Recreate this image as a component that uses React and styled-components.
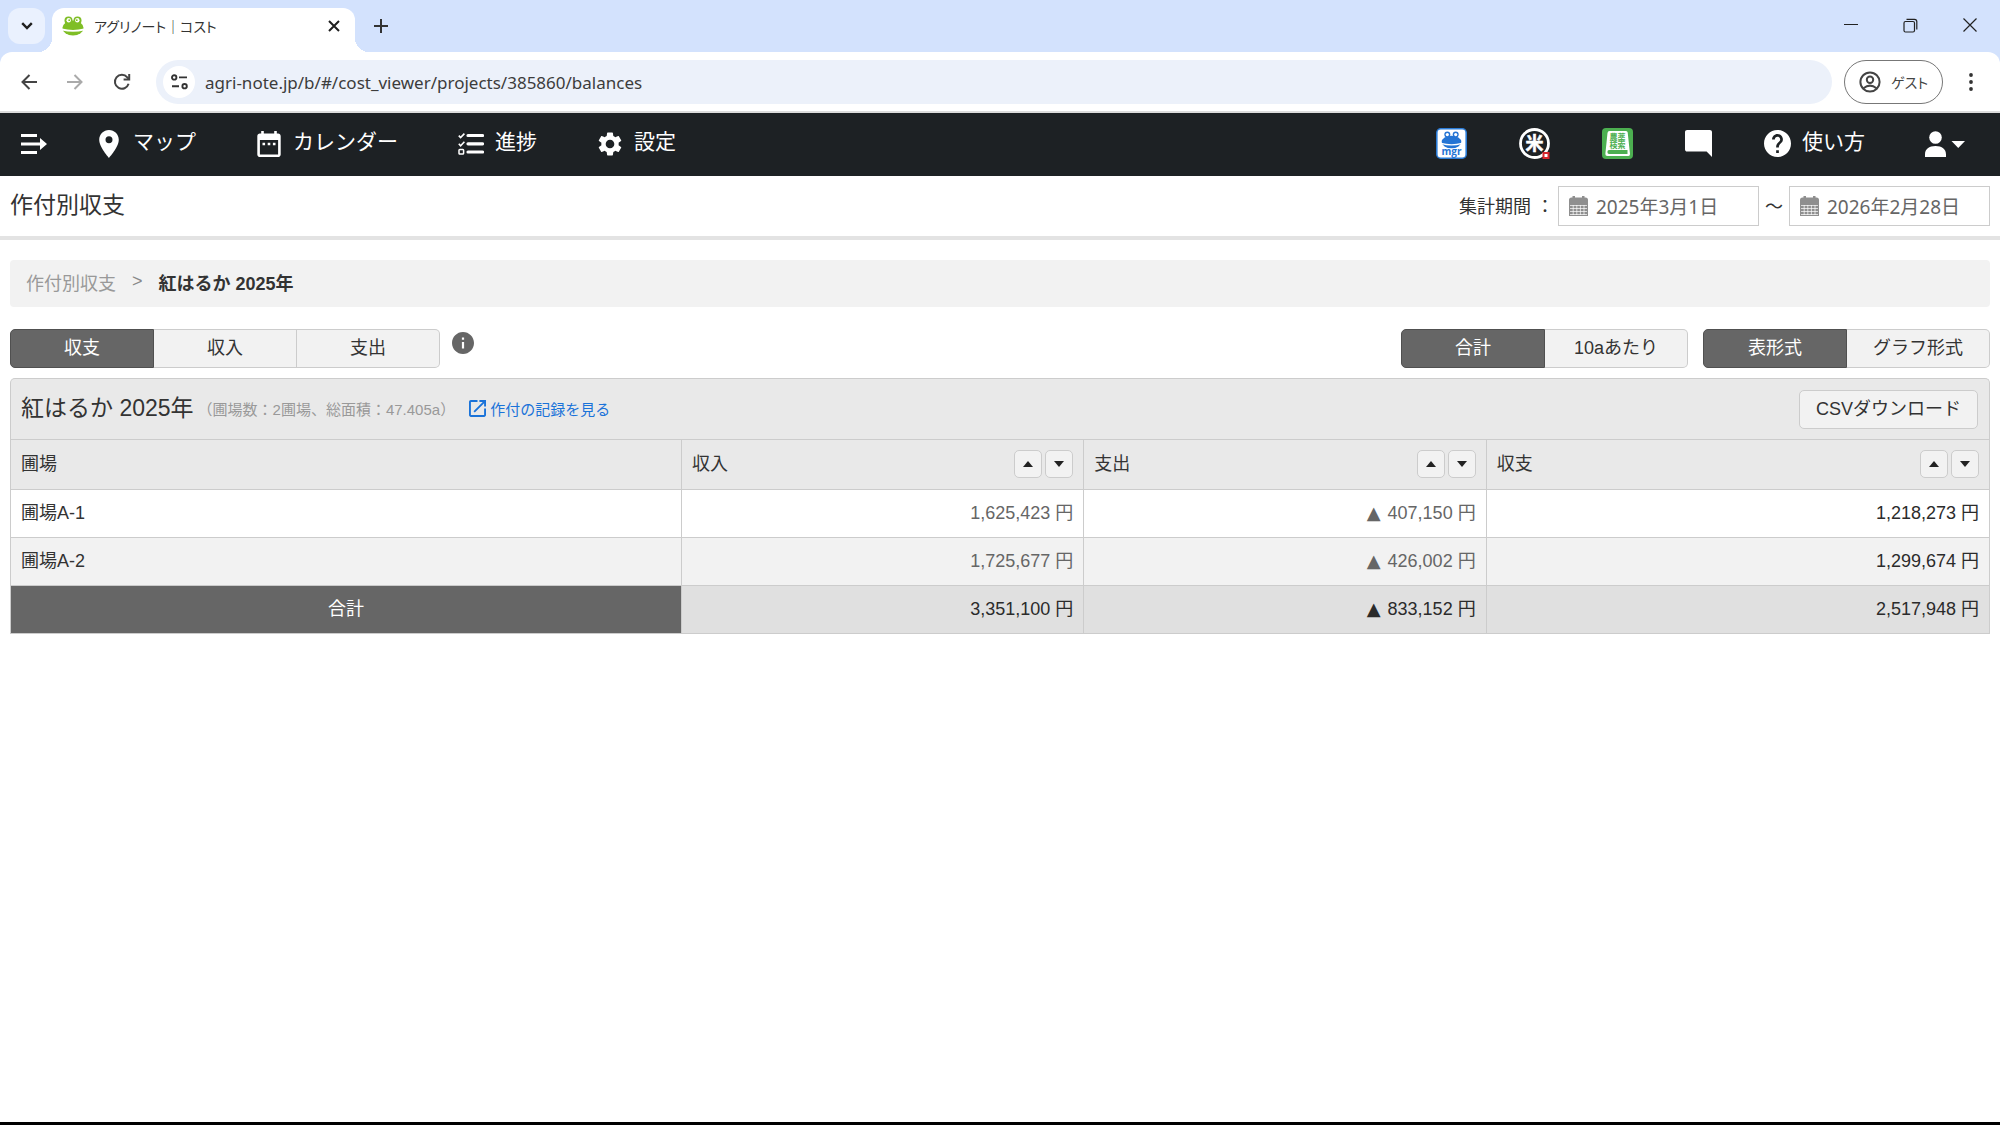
import React, { useState } from "react";
import styled, { createGlobalStyle } from "styled-components";

const appFont = `"Liberation Sans", "Noto Sans CJK JP", sans-serif`;
const uiFont = `"Noto Sans", "Noto Sans CJK JP", sans-serif`;

const fields = [
  { name: "圃場A-1", income: "1,625,423 円", cost: "407,150 円", balance: "1,218,273 円" },
  { name: "圃場A-2", income: "1,725,677 円", cost: "426,002 円", balance: "1,299,674 円" },
];

const columns = ["収入", "支出", "収支"];

/* ---------- icons ---------- */

const FrogIcon = () => (
  <svg width="22" height="20" viewBox="0 0 22 20" aria-hidden="true">
    <circle cx="6.5" cy="4.5" r="4" fill="#7fbe26" />
    <circle cx="15.5" cy="4.5" r="4" fill="#7fbe26" />
    <ellipse cx="11" cy="12" rx="10.6" ry="7.6" fill="#7fbe26" />
    <circle cx="6.7" cy="4.2" r="2.2" fill="#fff" />
    <circle cx="15.3" cy="4.2" r="2.2" fill="#fff" />
    <circle cx="7.2" cy="4.2" r="0.9" fill="#7fbe26" />
    <circle cx="14.8" cy="4.2" r="0.9" fill="#7fbe26" />
    <path d="M0 12.6Q11 15.4 22 12.6V14.4Q11 17 0 14.4Z" fill="#fff" />
  </svg>
);

const ChevronIcon = () => (
  <svg width="14" height="10" viewBox="0 0 14 10" fill="none" stroke="#1f1f1f" strokeWidth="2.4" aria-hidden="true">
    <path d="M2.2 2.2L7 7l4.8-4.8" />
  </svg>
);

const CloseIcon = () => (
  <svg width="12" height="12" viewBox="0 0 12 12" stroke="#1f1f1f" strokeWidth="2" aria-hidden="true">
    <path d="M1 1l10 10M11 1L1 11" />
  </svg>
);

const PlusIcon = () => (
  <svg width="14" height="14" viewBox="0 0 14 14" stroke="#333" strokeWidth="2" aria-hidden="true">
    <path d="M7 0v14M0 7h14" />
  </svg>
);

const MinimizeIcon = () => (
  <svg width="14" height="14" viewBox="0 0 14 14" stroke="#222" aria-hidden="true">
    <path d="M0 6.5h14" />
  </svg>
);

const RestoreIcon = () => (
  <svg width="15" height="15" viewBox="0 0 15 15" fill="none" stroke="#222" strokeWidth="1.2" aria-hidden="true">
    <rect x="1" y="3.5" width="10.5" height="10.5" rx="1.5" />
    <path d="M3.5 1.3h8q2.3 0 2.3 2.3v8" />
  </svg>
);

const QuitIcon = () => (
  <svg width="14" height="14" viewBox="0 0 14 14" stroke="#222" strokeWidth="1.2" aria-hidden="true">
    <path d="M.5.5l13 13M13.5.5l-13 13" />
  </svg>
);

const ArrowIcon = ({ color, forward }) => (
  <svg width="16" height="16" viewBox="0 0 16 16" fill="none" stroke={color} strokeWidth="2" aria-hidden="true">
    <path d={forward ? "M0 8h14M7.5 1l7 7-7 7" : "M16 8H2M8.5 1l-7 7 7 7"} />
  </svg>
);

const ReloadIcon = () => (
  <svg width="18" height="18" viewBox="0 0 18 18" fill="none" stroke="#444" strokeWidth="2" aria-hidden="true">
    <path d="M15.6 10.8A7 7 0 1 1 14.3 4.3L16 6.2" />
    <path d="M16.2 1v5.6h-5.6" />
  </svg>
);

const SiteIcon = () => (
  <svg width="17" height="16" viewBox="0 0 17 16" fill="none" stroke="#333" strokeWidth="1.9" aria-hidden="true">
    <circle cx="3.2" cy="3.4" r="2.2" />
    <path d="M8 3.4h8M1 12.2h7" />
    <circle cx="13.6" cy="12.2" r="2.2" />
  </svg>
);

const GuestIcon = () => (
  <svg width="22" height="22" viewBox="0 0 22 22" fill="none" stroke="#444" strokeWidth="2" aria-hidden="true">
    <circle cx="11" cy="11" r="9.6" />
    <circle cx="11" cy="8.8" r="3.2" />
    <path d="M4.5 17.3Q11 12 17.5 17.3" />
  </svg>
);

const DotsIcon = () => (
  <svg width="4" height="18" viewBox="0 0 4 18" fill="#333" aria-hidden="true">
    <circle cx="2" cy="2" r="1.9" />
    <circle cx="2" cy="9" r="1.9" />
    <circle cx="2" cy="16" r="1.9" />
  </svg>
);

const MenuIcon = () => (
  <svg width="26" height="20" viewBox="0 0 26 20" fill="#fff" aria-hidden="true">
    <path d="M0 0h16v3H0zM0 8.5h19v3H0zM0 17h16v3H0zM19 4l7 6-7 6z" />
  </svg>
);

const PinIcon = () => (
  <svg width="26" height="28" viewBox="2.7 2 18.6 20" fill="#fff" aria-hidden="true">
    <path d="M12 2C8.13 2 5 5.13 5 9c0 5.25 7 13 7 13s7-7.75 7-13c0-3.87-3.13-7-7-7zm0 9.5a2.5 2.5 0 0 1 0-5 2.5 2.5 0 0 1 0 5z" />
  </svg>
);

const CalendarIcon = () => (
  <svg width="26" height="26" viewBox="2 2 20 20" fill="#fff" aria-hidden="true">
    <path d="M9 11H7v2h2v-2zm4 0h-2v2h2v-2zm4 0h-2v2h2v-2zm2-7h-1V2h-2v2H8V2H6v2H5c-1.11 0-1.99.9-1.99 2L3 20c0 1.1.89 2 2 2h14c1.1 0 2-.9 2-2V6c0-1.1-.9-2-2-2zm0 16H5V9h14v11z" />
  </svg>
);

const ProgressIcon = () => (
  <svg width="26" height="22" viewBox="0 0 26 22" fill="none" stroke="#fff" aria-hidden="true">
    <path d="M10 2.5h14.5M10 10.8h14.5M10 19h14.5" strokeWidth="3.2" strokeLinecap="round" />
    <path d="M.8 2.6l1.8 2L6.4.6M.8 10.8l1.8 2 3.8-4" strokeWidth="1.6" />
    <rect x="1" y="16.5" width="4.6" height="4.6" rx=".8" strokeWidth="1.5" />
  </svg>
);

const GearIcon = () => (
  <svg width="26" height="26" viewBox="1.2 1.2 21.6 21.6" fill="#fff" aria-hidden="true">
    <path d="M19.14 12.94c.04-.3.06-.61.06-.94 0-.32-.02-.64-.07-.94l2.03-1.58c.18-.14.23-.41.12-.61l-1.92-3.32c-.12-.22-.37-.29-.59-.22l-2.39.96c-.5-.38-1.03-.7-1.62-.94l-.36-2.54c-.04-.24-.24-.41-.48-.41h-3.84c-.24 0-.43.17-.47.41l-.36 2.54c-.59.24-1.13.57-1.62.94l-2.39-.96c-.22-.08-.47 0-.59.22L2.74 8.87c-.12.21-.08.47.12.61l2.03 1.58c-.05.3-.09.63-.09.94s.02.64.07.94l-2.03 1.58c-.18.14-.23.41-.12.61l1.92 3.32c.12.22.37.29.59.22l2.39-.96c.5.38 1.03.7 1.62.94l.36 2.54c.05.24.24.41.48.41h3.84c.24 0 .44-.17.47-.41l.36-2.54c.59-.24 1.13-.56 1.62-.94l2.39.96c.22.08.47 0 .59-.22l1.92-3.32c.12-.22.07-.47-.12-.61l-2.01-1.58zM12 15.6c-1.98 0-3.6-1.62-3.6-3.6s1.62-3.6 3.6-3.6 3.6 1.62 3.6 3.6-1.62 3.6-3.6 3.6z" />
  </svg>
);

const ManagerIcon = () => (
  <svg width="31" height="31" viewBox="0 0 31 31" aria-hidden="true">
    <rect x=".8" y=".8" width="29.4" height="29.4" rx="4" fill="#fff" stroke="#2a7bd6" strokeWidth="1.6" />
    <circle cx="11.3" cy="6.6" r="3" fill="#2474d4" />
    <circle cx="19.7" cy="6.6" r="3" fill="#2474d4" />
    <ellipse cx="15.5" cy="14" rx="9.8" ry="6.3" fill="#2474d4" />
    <circle cx="11.3" cy="6.6" r="1.6" fill="#fff" />
    <circle cx="19.7" cy="6.6" r="1.6" fill="#fff" />
    <path d="M5 14.8Q15.5 17.6 26 14.8V16Q15.5 19 5 16Z" fill="#fff" />
    <text x="15.5" y="27.4" textAnchor="middle" fontFamily="Open Sans, sans-serif" fontSize="10" fontWeight="700" fill="#2474d4">
      mgr
    </text>
  </svg>
);

const RiceIcon = () => (
  <svg width="31" height="31" viewBox="0 0 31 31" aria-hidden="true">
    <circle cx="15.5" cy="15.5" r="14" fill="none" stroke="#fff" strokeWidth="2.8" />
    <text
      x="15.5"
      y="22.3"
      textAnchor="middle"
      fontFamily="Noto Sans CJK JP, sans-serif"
      fontSize="18"
      fontWeight="700"
      fill="#fff"
      stroke="#fff"
      strokeWidth=".5"
    >
      米
    </text>
    <rect x="23.5" y="24" width="7" height="7" fill="#d6262c" />
    <rect x="25.5" y="26" width="3" height="3" fill="#fff" />
  </svg>
);

const PesticideIcon = () => (
  <svg width="31" height="31" viewBox="0 0 31 31" aria-hidden="true">
    <rect width="31" height="31" rx="4" fill="#4caf50" />
    <path d="M7.5 3h16.5q1.5 0 1.7 1.5L28 26q.1 1.8-1.6 2H5.5Q3.2 28 3.4 25.5L5.5 5Q5.7 3 7.5 3z" fill="#fff" />
    <path d="M7 22h18.5v4H7q-1.6-.2-1.6-2T7 22z" fill="#4caf50" />
    <g fontFamily="Noto Sans CJK JP, sans-serif" fontSize="8" fontWeight="700" fill="#4caf50" textAnchor="middle">
      <text x="15.5" y="12">農薬</text>
      <text x="15.5" y="20">検索</text>
    </g>
  </svg>
);

const ChatIcon = () => (
  <svg width="27" height="27" viewBox="2 2 20 20" fill="#fff" aria-hidden="true">
    <path d="M2 3.6C2 2.7 2.7 2 3.6 2h16.8c.9 0 1.6.7 1.6 1.6V22l-4-4H3.6C2.7 18 2 17.3 2 16.4z" />
  </svg>
);

const HelpIcon = () => (
  <svg width="27" height="27" viewBox="2 2 20 20" fill="#fff" aria-hidden="true">
    <path d="M12 2C6.48 2 2 6.48 2 12s4.48 10 10 10 10-4.48 10-10S17.52 2 12 2zm1 17h-2v-2h2v2zm2.07-7.75l-.9.92C13.45 12.9 13 13.5 13 15h-2v-.5c0-1.1.45-2.1 1.17-2.83l1.24-1.26c.37-.36.59-.86.59-1.41 0-1.1-.9-2-2-2s-2 .9-2 2H8c0-2.21 1.79-4 4-4s4 1.79 4 4c0 .88-.36 1.68-.93 2.25z" />
  </svg>
);

const UserIcon = () => (
  <svg width="40" height="26" viewBox="0 0 40 26" fill="#fff" aria-hidden="true">
    <circle cx="10.5" cy="6.5" r="6.3" />
    <path d="M0 26v-2.5C0 18 4 15 10.5 15S21 18 21 23.5V26zM26.5 10h13.5l-6.75 7z" />
  </svg>
);

const DateIcon = () => (
  <svg width="19" height="20" viewBox="0 0 19 20" fill="#8f8f8f" aria-hidden="true">
    <path d="M2.5 1.5h1V0h2.5v1.5h7V0h2.5v1.5h1Q19 1.5 19 4v3H0V4q0-2.500 2.500-2.500z" />
    <rect y="7" width="19" height="13" />
    <path d="M1 9.5h17M1 12.5h17M1 15.5h17M1 18.5h17M4.2 9v10M7.8 9v10M11.4 9v10M15 9v10" stroke="#fff" strokeWidth=".7" />
  </svg>
);

const InfoIcon = () => (
  <svg width="22" height="22" viewBox="2 2 20 20" fill="#666" aria-hidden="true">
    <path d="M12 2C6.48 2 2 6.48 2 12s4.48 10 10 10 10-4.48 10-10S17.52 2 12 2zm1 15h-2v-6h2v6zm0-8h-2V7h2v2z" />
  </svg>
);

const OpenIcon = () => (
  <svg width="17" height="17" viewBox="3 3 18 18" fill="#1a73d9" aria-hidden="true">
    <path d="M19 19H5V5h7V3H5c-1.11 0-2 .9-2 2v14c0 1.1.89 2 2 2h14c1.1 0 2-.9 2-2v-7h-2v7zM14 3v2h3.59l-9.83 9.83 1.41 1.41L19 6.41V10h2V3h-7z" />
  </svg>
);

const SortIcon = ({ down }) => (
  <svg width="10" height="6" viewBox="0 0 10 6" fill="#222" aria-hidden="true">
    <path d={down ? "M0 0h10L5 6z" : "M0 6h10L5 0z"} />
  </svg>
);

/* ---------- parts ---------- */

const SegmentGroup = ({ label, options }) => {
  const [active, setActive] = useState(0);

  return (
    <Segments role="group" aria-label={label}>
      {options.map((option, i) => (
        <Segment key={option} $active={i === active} aria-pressed={i === active} onClick={() => setActive(i)}>
          {option}
        </Segment>
      ))}
    </Segments>
  );
};

const DateField = ({ label, value }) => (
  <DateBox>
    <DateIcon />
    <DateInput aria-label={label} defaultValue={value} />
  </DateBox>
);

const BrowserChrome = () => (
  <Chrome>
    <TabStrip>
      <TabSearch aria-label="タブを検索">
        <ChevronIcon />
      </TabSearch>
      <Tab>
        <FrogIcon />
        <TabTitle>アグリノート｜コスト</TabTitle>
        <PlainButton aria-label="閉じる">
          <CloseIcon />
        </PlainButton>
      </Tab>
      <NewTab aria-label="新しいタブ">
        <PlusIcon />
      </NewTab>
      <WindowControls>
        <PlainButton aria-label="最小化">
          <MinimizeIcon />
        </PlainButton>
        <PlainButton aria-label="元に戻す">
          <RestoreIcon />
        </PlainButton>
        <PlainButton aria-label="ウィンドウを閉じる">
          <QuitIcon />
        </PlainButton>
      </WindowControls>
    </TabStrip>
    <Toolbar>
      <History>
        <PlainButton aria-label="戻る">
          <ArrowIcon color="#444" />
        </PlainButton>
        <PlainButton aria-label="進む">
          <ArrowIcon color="#aaa" forward />
        </PlainButton>
        <PlainButton aria-label="再読み込み">
          <ReloadIcon />
        </PlainButton>
      </History>
      <AddressBar>
        <SiteInfo aria-label="サイト情報">
          <SiteIcon />
        </SiteInfo>
        <AddressInput aria-label="アドレス" defaultValue="agri-note.jp/b/#/cost_viewer/projects/385860/balances" />
      </AddressBar>
      <Guest>
        <GuestIcon />
        ゲスト
      </Guest>
      <PlainButton aria-label="メニュー">
        <DotsIcon />
      </PlainButton>
    </Toolbar>
  </Chrome>
);

const Navbar = () => (
  <Nav>
    <PlainButton aria-label="メニューを開く">
      <MenuIcon />
    </PlainButton>
    <NavList>
      <NavLink href="#map">
        <PinIcon />
        <NavText>マップ</NavText>
      </NavLink>
      <NavLink href="#calendar">
        <CalendarIcon />
        <NavText>カレンダー</NavText>
      </NavLink>
      <NavLink href="#progress">
        <ProgressIcon />
        <NavText>進捗</NavText>
      </NavLink>
      <NavLink href="#settings">
        <GearIcon />
        <NavText>設定</NavText>
      </NavLink>
    </NavList>
    <NavTools>
      <NavLink href="#manager" aria-label="マネージャー">
        <ManagerIcon />
      </NavLink>
      <NavLink href="#rice" aria-label="米">
        <RiceIcon />
      </NavLink>
      <NavLink href="#pesticide" aria-label="農薬検索">
        <PesticideIcon />
      </NavLink>
      <NavLink href="#chat" aria-label="チャット">
        <ChatIcon />
      </NavLink>
      <NavLink href="#help">
        <HelpIcon />
        <NavText>使い方</NavText>
      </NavLink>
    </NavTools>
    <PlainButton aria-label="アカウント">
      <UserIcon />
    </PlainButton>
  </Nav>
);

const BalanceTable = () => (
  <Table>
    <colgroup>
      <FieldCol />
      <MoneyCol />
      <MoneyCol />
      <col />
    </colgroup>
    <thead>
      <tr>
        <HeadCell scope="col">
          <HeadLabel>圃場</HeadLabel>
        </HeadCell>
        {columns.map((column) => (
          <HeadCell scope="col" key={column}>
            <HeadInner>
              <HeadLabel>{column}</HeadLabel>
              <SortButtons>
                <SortButton aria-label={`${column} 昇順`}>
                  <SortIcon />
                </SortButton>
                <SortButton aria-label={`${column} 降順`}>
                  <SortIcon down />
                </SortButton>
              </SortButtons>
            </HeadInner>
          </HeadCell>
        ))}
      </tr>
    </thead>
    <tbody>
      {fields.map((field) => (
        <BodyRow key={field.name}>
          <NameCell scope="row">{field.name}</NameCell>
          <MoneyCell>{field.income}</MoneyCell>
          <MoneyCell>
            <MinusMark>▲</MinusMark> {field.cost}
          </MoneyCell>
          <MoneyCell $strong>{field.balance}</MoneyCell>
        </BodyRow>
      ))}
    </tbody>
    <tfoot>
      <TotalRow>
        <TotalCell scope="row">合計</TotalCell>
        <MoneyCell $strong>3,351,100 円</MoneyCell>
        <MoneyCell $strong>
          <MinusMark>▲</MinusMark> 833,152 円
        </MoneyCell>
        <MoneyCell $strong>2,517,948 円</MoneyCell>
      </TotalRow>
    </tfoot>
  </Table>
);

const App = () => (
  <Page>
    <GlobalStyle />
    <BrowserChrome />
    <Navbar />
    <TitleBar>
      <PageTitle>作付別収支</PageTitle>
      <Period>
        <PeriodLabel>集計期間 ：</PeriodLabel>
        <DateField label="開始日" value="2025年3月1日" />
        <Tilde>～</Tilde>
        <DateField label="終了日" value="2026年2月28日" />
      </Period>
    </TitleBar>
    <Main>
      <Breadcrumb aria-label="パンくず">
        <CrumbLink href="#balances">作付別収支</CrumbLink>
        <CrumbMark>&gt;</CrumbMark>
        <strong>紅はるか 2025年</strong>
      </Breadcrumb>
      <Controls>
        <SegmentGroup label="項目" options={["収支", "収入", "支出"]} />
        <InfoButton aria-label="説明">
          <InfoIcon />
        </InfoButton>
        <ControlsEnd>
          <SegmentGroup label="集計単位" options={["合計", "10aあたり"]} />
          <SegmentGroup label="表示形式" options={["表形式", "グラフ形式"]} />
        </ControlsEnd>
      </Controls>
      <Panel>
        <PanelHead>
          <PanelTitle>紅はるか 2025年</PanelTitle>
          <PanelNote>（圃場数：2圃場、総面積：47.405a）</PanelNote>
          <RecordLink href="#records">
            <OpenIcon />
            作付の記録を見る
          </RecordLink>
          <CsvButton>CSVダウンロード</CsvButton>
        </PanelHead>
        <BalanceTable />
      </Panel>
    </Main>
  </Page>
);

export default App;

/* ---------- styles ---------- */

const GlobalStyle = createGlobalStyle`
  * {
    box-sizing: border-box;
  }
  body {
    margin: 0;
    background: #fff;
    color: #333;
    font-family: ${appFont};
    font-size: 18px;
  }
  button, input {
    font: inherit;
    color: inherit;
  }
  button {
    cursor: pointer;
  }
  svg {
    display: block;
    flex-shrink: 0;
  }
`;

const Page = styled.div`
  min-height: 100vh;
  border-bottom: 3px solid #000;
`;

const Chrome = styled.header`
  background: #d3e2fd;
  font-family: ${uiFont};
`;

const PlainButton = styled.button`
  display: flex;
  padding: 0;
  border: 0;
  background: none;
`;

const TabStrip = styled.div`
  display: flex;
  align-items: stretch;
  height: 52px;
  padding: 8px 23px 0 8px;
`;

const TabSearch = styled(PlainButton)`
  align-items: center;
  justify-content: center;
  width: 37px;
  height: 36px;
  border-radius: 12px;
  background: #eaf1fe;
`;

const Tab = styled.div`
  position: relative;
  display: flex;
  align-items: center;
  gap: 10px;
  width: 303px;
  margin-left: 7px;
  padding: 0 15px 8px 10px;
  border-radius: 12px 12px 0 0;
  background: #fff;

  &::before,
  &::after {
    content: "";
    position: absolute;
    bottom: 0;
    width: 14px;
    height: 14px;
  }
  &::before {
    left: -14px;
    background: radial-gradient(circle at 0 0, transparent 14px, #fff 14px);
  }
  &::after {
    right: -14px;
    background: radial-gradient(circle at 100% 0, transparent 14px, #fff 14px);
  }
`;

const TabTitle = styled.span`
  flex: 1;
  font-size: 14px;
  font-feature-settings: "palt";
  white-space: nowrap;
`;

const NewTab = styled(PlainButton)`
  align-items: center;
  margin-left: 19px;
  padding-bottom: 8px;
`;

const WindowControls = styled.div`
  display: flex;
  align-items: center;
  gap: 45px;
  margin-left: auto;
  padding-bottom: 10px;
`;

const Toolbar = styled.div`
  display: flex;
  align-items: center;
  height: 61px;
  padding: 0 27px 0 21px;
  border-bottom: 2px solid #dcdcdc;
  border-radius: 12px 12px 0 0;
  background: #fff;
`;

const History = styled.div`
  display: flex;
  align-items: center;
  gap: 30px;
  margin-right: 25px;
`;

const AddressBar = styled.div`
  flex: 1;
  display: flex;
  align-items: center;
  gap: 10px;
  height: 44px;
  padding: 0 7px;
  border-radius: 22px;
  background: #ecf1fa;
`;

const SiteInfo = styled(PlainButton)`
  align-items: center;
  justify-content: center;
  width: 32px;
  height: 32px;
  border-radius: 50%;
  background: #fff;
`;

const AddressInput = styled.input`
  flex: 1;
  padding: 2px 0 0;
  border: 0;
  background: none;
  color: #3c3c3c;
  font-size: 17px;
`;

const Guest = styled.button`
  display: flex;
  align-items: center;
  gap: 10px;
  height: 44px;
  margin: 0 26px 0 12px;
  padding: 0 14px;
  border: 1px solid #777;
  border-radius: 22px;
  background: #fff;
  color: #444;
  font-size: 14px;
  font-feature-settings: "palt";
`;

const Nav = styled.nav`
  display: flex;
  align-items: center;
  height: 63px;
  padding: 0 35px 2px 21px;
  background: #1d2124;
  color: #fff;
`;

const NavList = styled.div`
  display: flex;
  gap: 60px;
  margin-left: 49px;
`;

const NavTools = styled.div`
  display: flex;
  align-items: center;
  gap: 52px;
  margin: 0 60px 0 auto;
`;

const NavLink = styled.a`
  display: flex;
  align-items: center;
  gap: 11px;
  color: #fff;
  font-size: 21px;
  line-height: 28px;
  text-decoration: none;
`;

const NavText = styled.span`
  padding-bottom: 3px;
`;

const TitleBar = styled.div`
  display: flex;
  align-items: center;
  justify-content: space-between;
  height: 64px;
  padding: 0 10px;
  border-bottom: 4px solid #e3e3e3;
`;

const PageTitle = styled.h1`
  margin: 0;
  padding-bottom: 7px;
  font-size: 23px;
  font-weight: 400;
`;

const Period = styled.div`
  display: flex;
  align-items: center;
`;

const PeriodLabel = styled.span`
  margin-right: 4px;
  padding-bottom: 3px;
`;

const Tilde = styled.span`
  width: 30px;
  padding-bottom: 3px;
  text-align: center;
`;

const DateBox = styled.label`
  display: flex;
  align-items: center;
  gap: 8px;
  width: 201px;
  height: 40px;
  padding: 0 10px;
  border: 1px solid #ccc;
`;

const DateInput = styled.input`
  width: 100%;
  padding: 0;
  border: 0;
  color: #666;
  font-family: ${uiFont};
  font-size: 19px;
`;

const Main = styled.main`
  padding: 20px 10px 0;
`;

const Breadcrumb = styled.nav`
  display: flex;
  align-items: center;
  gap: 16px;
  height: 47px;
  padding: 0 16px 4px;
  border-radius: 4px;
  background: #f2f2f2;
`;

const CrumbLink = styled.a`
  color: #999;
  text-decoration: none;
`;

const CrumbMark = styled.span`
  color: #888;
`;

const Controls = styled.div`
  display: flex;
  align-items: center;
  margin: 22px 0 10px;
`;

const ControlsEnd = styled.div`
  display: flex;
  gap: 15px;
  margin-left: auto;
`;

const InfoButton = styled(PlainButton)`
  align-self: flex-start;
  margin: 3px 0 0 12px;
`;

const Segments = styled.div`
  display: flex;
`;

const Segment = styled.button`
  width: 144px;
  height: 39px;
  padding: 0 0 5px;
  border: 1px solid ${({ $active }) => ($active ? "#505050" : "#ccc")};
  background: ${({ $active }) => ($active ? "#666" : "#f2f2f2")};
  color: ${({ $active }) => ($active ? "#fff" : "#333")};

  &:first-child {
    border-radius: 5px 0 0 5px;
  }
  &:last-child {
    border-radius: 0 5px 5px 0;
  }
  & + & {
    width: 143px;
    border-left: 0;
  }
`;

const Panel = styled.section`
  border: 1px solid #ccc;
  border-bottom: 0;
  border-radius: 5px 5px 0 0;
  background: #e9e9e9;
`;

const PanelHead = styled.div`
  display: flex;
  align-items: center;
  height: 60px;
  padding: 0 11px 0 10px;
`;

const PanelTitle = styled.h2`
  margin: 0;
  padding-bottom: 7px;
  font-size: 23px;
  font-weight: 400;
`;

const PanelNote = styled.span`
  margin-left: 4px;
  padding-bottom: 1px;
  color: #999;
  font-size: 15px;
`;

const RecordLink = styled.a`
  display: flex;
  align-items: center;
  gap: 4px;
  margin-left: 14px;
  padding-bottom: 1px;
  color: #1a73d9;
  font-size: 15px;
  text-decoration: none;
`;

const CsvButton = styled.button`
  height: 39px;
  margin-left: auto;
  padding: 0 16px 5px;
  border: 1px solid #ccc;
  border-radius: 5px;
  background: #f2f2f2;
`;

const Table = styled.table`
  width: 100%;
  border-collapse: collapse;
  table-layout: fixed;
`;

const FieldCol = styled.col`
  width: 33.9%;
`;

const MoneyCol = styled.col`
  width: 20.34%;
`;

const Cell = styled.td`
  height: 48px;
  padding: 0 10px 5px;
  border: 1px solid #ccc;
  font-weight: 400;
  text-align: left;

  &:first-child {
    border-left: 0;
  }
  &:last-child {
    border-right: 0;
  }
`;

const HeadCell = styled(Cell).attrs({ as: "th" })`
  height: 50px;
  padding: 0 10px 1px;
`;

const HeadInner = styled.div`
  display: flex;
  align-items: center;
  justify-content: space-between;
`;

const HeadLabel = styled.div`
  padding-bottom: 4px;
`;

const SortButtons = styled.div`
  display: flex;
  gap: 3px;
`;

const SortButton = styled.button`
  display: flex;
  align-items: center;
  justify-content: center;
  width: 28px;
  height: 28px;
  padding: 0;
  border: 1px solid #ccc;
  border-radius: 5px;
  background: #f2f2f2;
`;

const BodyRow = styled.tr`
  background: #fff;

  &:nth-child(even) {
    background: #f2f2f2;
  }
`;

const NameCell = styled(Cell).attrs({ as: "th" })``;

const MoneyCell = styled(Cell)`
  color: ${({ $strong }) => ($strong ? "#2b2b2b" : "#666")};
  text-align: right;
`;

const MinusMark = styled.span`
  margin-right: 2px;
  font-family: "DejaVu Sans", sans-serif;
  line-height: 1;
`;

const TotalRow = styled.tr`
  background: #e0e0e0;
`;

const TotalCell = styled(Cell).attrs({ as: "th" })`
  background: #666;
  color: #fff;
  text-align: center;
`;
